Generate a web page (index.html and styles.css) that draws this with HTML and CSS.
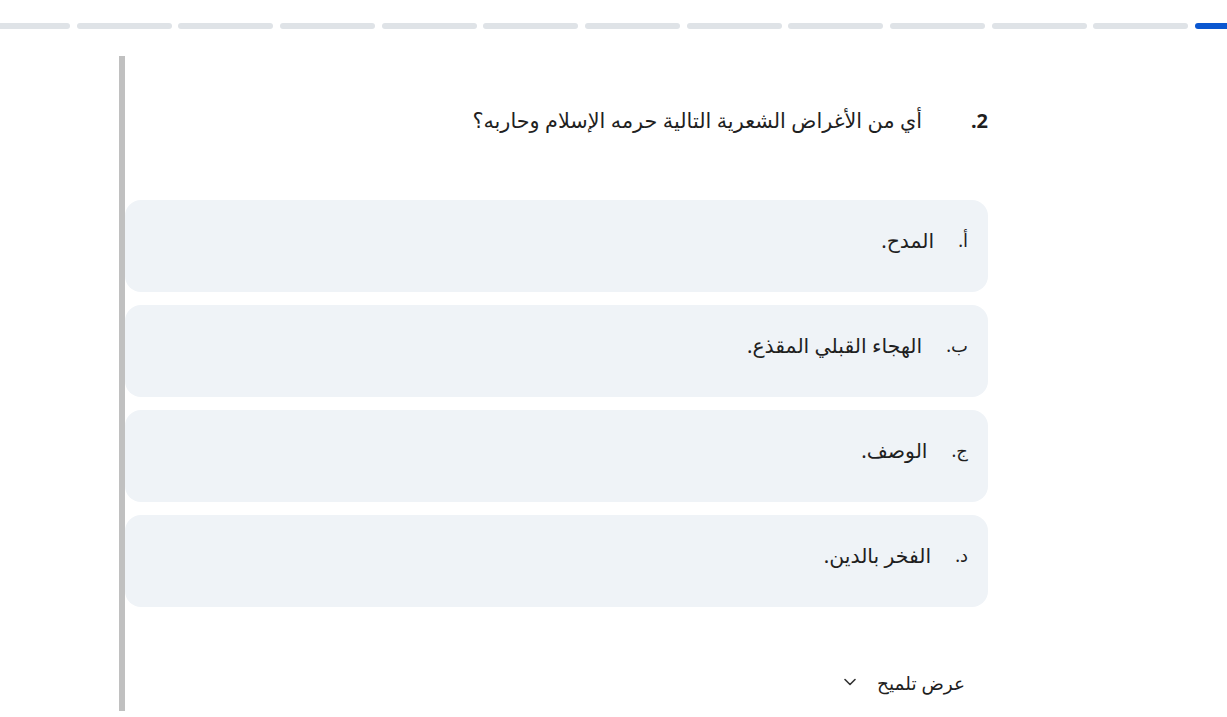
FILE: index.html
```html
<!DOCTYPE html>
<html lang="ar" dir="rtl">
<head>
    <meta charset="UTF-8">
    <meta name="viewport" content="width=device-width, initial-scale=1.0">
    <title>اختبار</title>
    <link rel="stylesheet" href="styles.css">
</head>
<body>
    <div class="progress">
        <div class="progress-track">
            <span class="step current"></span>
            <span class="step"></span>
            <span class="step"></span>
            <span class="step"></span>
            <span class="step"></span>
            <span class="step"></span>
            <span class="step"></span>
            <span class="step"></span>
            <span class="step"></span>
            <span class="step"></span>
            <span class="step"></span>
            <span class="step"></span>
            <span class="step"></span>
        </div>
    </div>

    <div class="quiz">
        <div class="question">
            <span class="question-num">2.</span>
            <span class="question-text">أي من الأغراض الشعرية التالية حرمه الإسلام وحاربه؟</span>
        </div>

        <div class="options">
            <div class="option"><span class="option-label">أ.</span><span class="option-text">المدح.</span></div>
            <div class="option"><span class="option-label">ب.</span><span class="option-text">الهجاء القبلي المقذع.</span></div>
            <div class="option"><span class="option-label">ج.</span><span class="option-text">الوصف.</span></div>
            <div class="option"><span class="option-label">د.</span><span class="option-text">الفخر بالدين.</span></div>
        </div>

        <button class="hint">
            <span>عرض تلميح</span>
            <svg width="12" height="8" viewBox="0 0 12 8" fill="none" stroke="#333" stroke-width="1.6" stroke-linecap="round" stroke-linejoin="round"><path d="M1 1.5l5 5 5-5"/></svg>
        </button>
    </div>
</body>
</html>
```

FILE: styles.css
```css
body {
    margin: 0;
    font-family: "Noto Sans", "DejaVu Sans", sans-serif;
    color: #1f1f1f;
    background-color: #fff;
}
.progress {
    overflow: hidden;
    padding-top: 23px;
}
.progress-track {
    display: flex;
    gap: 6.6px;
    margin: 0 -63px 0 -25px;
}
.step {
    flex: 1;
    height: 6px;
    border-radius: 3px;
    background-color: #dfe3e7;
}
.step.current {
    background-color: #0b57d0;
}
.quiz {
    width: 863px;
    margin: 27px auto 0 119px;
    border-left: 6px solid #c0c0c0;
    padding-bottom: 11px;
}
.question {
    display: flex;
    align-items: baseline;
    padding-top: 50px;
    height: 30px;
}
.question-num {
    font-weight: bold;
    font-size: 20px;
    width: 66px;
}
.question-text {
    font-size: 20.8px;
}
.options {
    display: flex;
    flex-direction: column;
    gap: 13px;
    margin-top: 64px;
}
.option {
    background-color: #eff3f7;
    border-radius: 16px;
    height: 92px;
    padding: 0 20px;
    display: flex;
    align-items: center;
    font-size: 20.4px;
    box-sizing: border-box;
    padding-bottom: 12px;
}
.option-label {
    font-size: 18px;
    margin-left: 24px;
}
.hint {
    display: flex;
    align-items: center;
    gap: 21px;
    margin: 57px 23px 0 0;
    padding: 0;
    background: none;
    border: none;
    font-family: inherit;
    font-size: 18.5px;
    color: #1f1f1f;
    cursor: pointer;
    height: 36px;
}
```
